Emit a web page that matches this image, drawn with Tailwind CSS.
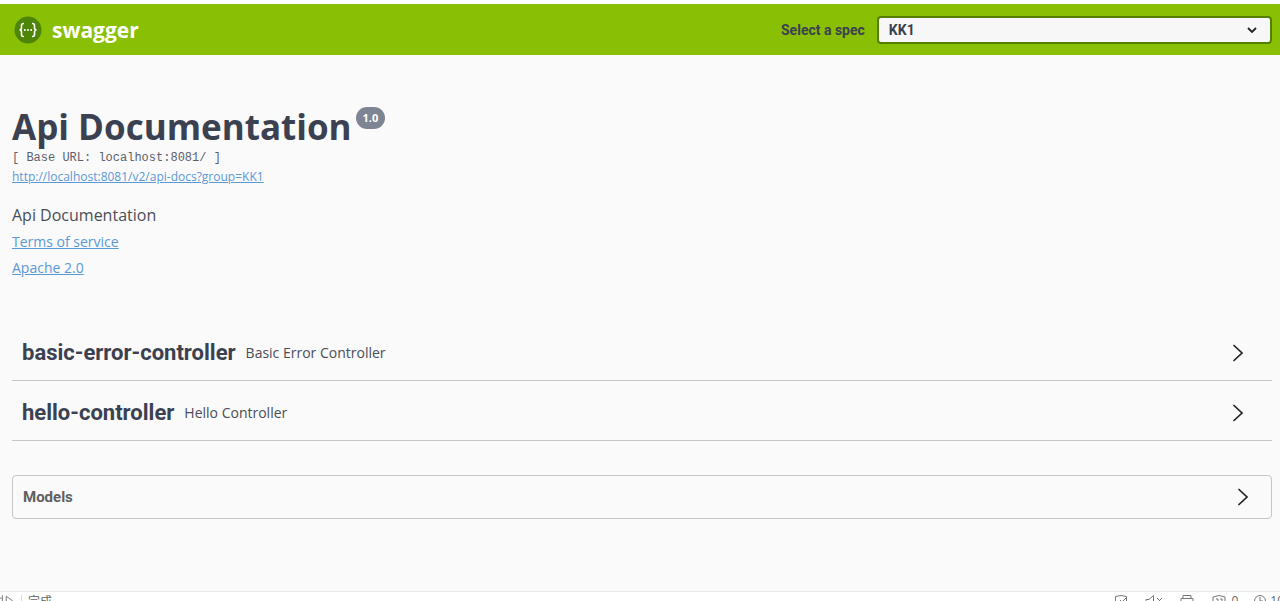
<!DOCTYPE html>
<html lang="en">
<head>
    <meta charset="UTF-8">
    <meta name="viewport" content="width=device-width, initial-scale=1.0">
    <title>Swagger UI</title>
    <script src="https://cdn.jsdelivr.net/npm/@tailwindcss/browser@4"></script>
</head>
<body class="flex h-screen flex-col overflow-hidden bg-[#fafafa] font-['Open_Sans',sans-serif] text-[#3b4151]">

    <!-- Topbar -->
    <header class="flex h-[55px] shrink-0 items-center justify-between border-t-4 border-white bg-[#89bf04] pr-2 pl-3.5">
        <a href="#" class="flex items-center gap-2.5 text-white">
            <svg class="size-7" viewBox="0 0 28 28" fill="none">
                <circle cx="14" cy="14" r="13.5" fill="#4f8506"/>
                <path d="M10 7.500H9.500c-1.500 0-2 .7-2 2v2.300c0 1.400-.6 2.200-2 2.200 1.400 0 2 .8 2 2.200v2.300c0 1.300.5 2 2 2h.5M18 7.500h.5c1.500 0 2 .7 2 2v2.300c0 1.400.6 2.200 2 2.200-1.400 0-2 .8-2 2.200v2.300c0 1.300-.5 2-2 2h-.5" stroke="#fff" stroke-width="1.600"/>
                <g fill="#fff"><circle cx="10.800" cy="14" r="1"/><circle cx="14" cy="14" r="1"/><circle cx="17.200" cy="14" r="1"/></g>
            </svg>
            <span class="text-[21px] leading-7 font-bold">swagger</span>
        </a>
        <form class="flex w-[491px] items-center gap-3">
            <label for="spec" class="shrink-0 font-['Roboto',sans-serif] text-sm font-bold">Select a spec</label>
            <div class="relative grow">
                <select id="spec" class="block h-7 w-full appearance-none rounded-sm border-2 border-[#547f00] bg-[#f7f7f7] px-2.5 font-['Roboto',sans-serif] text-sm leading-5 font-bold">
                    <option>KK1</option>
                </select>
                <svg class="pointer-events-none absolute top-2 right-3.5 size-3" viewBox="0 0 12 12" fill="none" stroke="#222" stroke-width="1.800">
                    <path d="M2 4l4 4 4-4"/>
                </svg>
            </div>
        </form>
    </header>

    <main class="grow pr-2 pl-3">
        <!-- Info -->
        <section class="pt-12">
            <h1 class="flex items-start gap-1 text-[35px] leading-12 font-bold">
                Api Documentation
                <span class="mt-1 rounded-full bg-[#7d8492] px-[7px] text-[11px] leading-[22px] text-white">1.0</span>
            </h1>
            <pre class="font-['Liberation_Mono',monospace] text-xs leading-3.5 text-[#5a5f6b]">[ Base URL: localhost:8081/ ]</pre>
            <a href="#" class="block w-fit text-xs leading-6 text-[#5b98d8] underline">http://localhost:8081/v2/api-docs?group=KK1</a>
            <p class="mt-3.5 text-base leading-6 text-[#4a4d56]">Api Documentation</p>
            <a href="#" class="mt-0.5 block w-fit text-sm leading-[26px] text-[#5b98d8] underline">Terms of service</a>
            <a href="#" class="block w-fit text-sm leading-[26px] text-[#5b98d8] underline">Apache 2.0</a>
        </section>

        <!-- Controllers -->
        <section class="mt-10">
            <button type="button" class="flex h-[60px] w-full items-center border-b border-[#c4c6ca] pr-6 pl-2.5 pt-2 pb-1 text-left">
                <span class="font-['Roboto',sans-serif] text-[22px] leading-8 font-bold">basic-error-controller</span>
                <span class="grow pl-2.5 text-sm text-[#4a4d56]">Basic Error Controller</span>
                <svg class="size-5" viewBox="0 0 20 20" fill="none" stroke="#222" stroke-width="1.700" stroke-linecap="round"><path d="M6 2.500l8 7.500-8 7.500"/></svg>
            </button>
            <button type="button" class="flex h-[60px] w-full items-center border-b border-[#c4c6ca] pr-6 pl-2.5 pt-2 pb-1 text-left">
                <span class="font-['Roboto',sans-serif] text-[22px] leading-8 font-bold">hello-controller</span>
                <span class="grow pl-2.5 text-sm text-[#4a4d56]">Hello Controller</span>
                <svg class="size-5" viewBox="0 0 20 20" fill="none" stroke="#222" stroke-width="1.700" stroke-linecap="round"><path d="M6 2.500l8 7.500-8 7.500"/></svg>
            </button>
        </section>

        <!-- Models -->
        <button type="button" class="mt-[34px] flex h-11 w-full items-center justify-between rounded border border-[#c4c6ca] pr-[18px] pl-2.5">
            <span class="font-['Roboto',sans-serif] text-[15px] font-bold text-[#606060]">Models</span>
            <svg class="size-5" viewBox="0 0 20 20" fill="none" stroke="#222" stroke-width="1.700" stroke-linecap="round"><path d="M6 2.500l8 7.500-8 7.500"/></svg>
        </button>
    </main>

    <!-- Status bar -->
    <footer class="flex h-2.5 shrink-0 items-start justify-between overflow-hidden border-t border-[#e8e8e8] bg-white text-xs leading-3 text-[#666]">
        <div class="flex items-start pt-[3px]">
            <svg class="h-3 w-[22px] border-r border-[#ddd]" viewBox="0 0 22 12" fill="none" stroke="#777"><path d="M2.500 0v12M6.500 11V1l7 5M0 3h2"/></svg>
            <span class="pl-1.5 font-['Noto_Sans_CJK_SC',sans-serif]">完成</span>
        </div>
        <div class="flex shrink-0 items-start gap-4 pt-[3px]">
            <svg class="h-3 w-4" viewBox="0 0 16 12" fill="none" stroke="#777"><path d="M2.500 1.500Q8-.5 13.500 1.500V8L8 11.500 2.500 8zM7 5l2 2 4-4"/></svg>
            <svg class="h-3 w-[18px]" viewBox="0 0 18 12" fill="none" stroke="#777"><path d="M1 4.500h3l4.500-4v11L4 8H1zM12 3l5 5M17 3l-5 5"/></svg>
            <svg class="h-3 w-4" viewBox="0 0 16 12" fill="none" stroke="#777"><path d="M4 3.500v-3h8v3M2 9.500v-6h12v6M5 7h6v4H5z"/></svg>
            <span class="flex items-start gap-1">
                <svg class="h-3 w-4" viewBox="0 0 16 12" fill="none" stroke="#777"><path d="M2 10V2Q8-1 14 2v8zM5 4h2v3M9 4h2v3"/></svg>
                <span>0</span>
            </span>
            <span class="-mr-1 flex items-start gap-1">
                <svg class="size-3" viewBox="0 0 12 12" fill="none" stroke="#777"><circle cx="6" cy="6" r="5.500"/><path d="M6 2v4h3"/></svg>
                <span>10</span>
            </span>
        </div>
    </footer>

</body>
</html>
